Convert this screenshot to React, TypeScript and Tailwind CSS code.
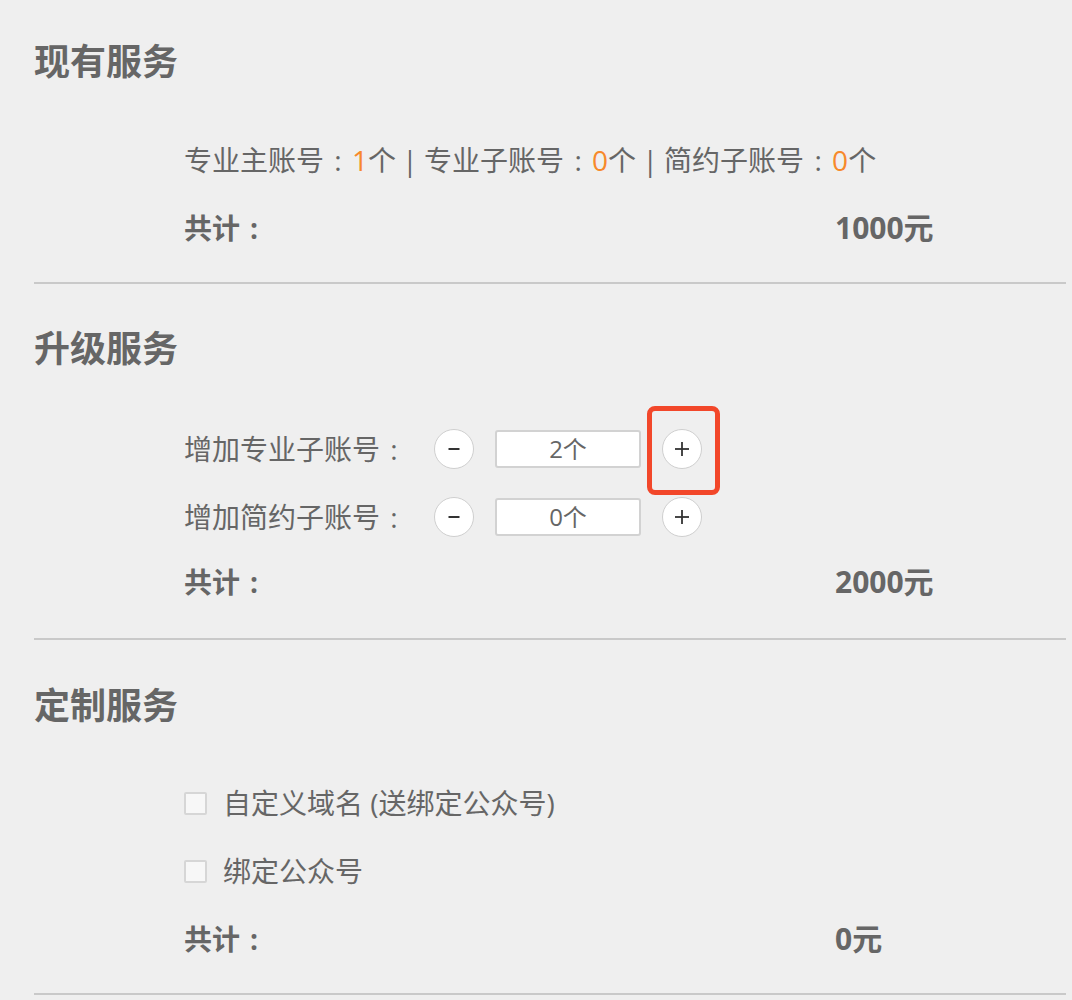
import type { ReactNode } from "react";

const font = { fontFamily: '"Open Sans", "Noto Sans CJK SC", sans-serif' };

// centred full-width colon, like the original
function Colon() {
  return <span className="inline-block w-[28px] text-center">:</span>;
}

function Heading({ children }: { children: ReactNode }) {
  return (
    <div className="flex h-[50px] items-center text-[36px] font-bold leading-none text-[#666]">
      {children}
    </div>
  );
}

function Total({ amount, className = "h-[68px]" }: { amount: string; className?: string }) {
  return (
    <div className={`flex items-center pl-[150px] text-[28px] font-bold leading-none text-[#666] ${className}`}>
      <span className="w-[651px]">
        共计<Colon />
      </span>
      <span className="text-[30px]">{amount}</span>
    </div>
  );
}

function Divider() {
  return <div className="h-[2px] bg-[#c9c9c9]" />;
}

function Orange({ children }: { children: ReactNode }) {
  return <span className="text-[#f7892b]">{children}</span>;
}

function Sep() {
  return <span className="inline-block w-[28px] text-center">|</span>;
}

function RoundButton({ kind, highlight }: { kind: "minus" | "plus"; highlight?: boolean }) {
  return (
    <button className="relative flex h-[40px] w-[40px] items-center justify-center rounded-full border-[1.5px] border-[#cfcfcf] bg-white">
      <svg width="16" height="16" viewBox="0 0 16 16" className="text-[#333]">
        {kind === "minus" ? (
          <line x1="2.5" y1="8" x2="13.5" y2="8" stroke="currentColor" strokeWidth="2" />
        ) : (
          <>
            <line x1="1" y1="8" x2="15" y2="8" stroke="currentColor" strokeWidth="1.8" />
            <line x1="8" y1="1" x2="8" y2="15" stroke="currentColor" strokeWidth="1.8" />
          </>
        )}
      </svg>
      {highlight && (
        <span className="pointer-events-none absolute -left-[16px] -top-[24px] h-[89px] w-[73px] rounded-[8px] border-[5px] border-[#f2472a]" />
      )}
    </button>
  );
}

function Stepper({ label, value, highlight }: { label: string; value: string; highlight?: boolean }) {
  return (
    <div className="flex h-[68px] items-center pl-[150px] text-[28px] leading-none text-[#666]">
      <span className="w-[250px]">
        {label}
        <Colon />
      </span>
      <RoundButton kind="minus" />
      <div className="mx-[21px] flex h-[38px] w-[146px] items-center justify-center rounded-[3px] border-2 border-[#d2d2d2] bg-white text-[24px] text-[#666]">
        {value}
      </div>
      <RoundButton kind="plus" highlight={highlight} />
    </div>
  );
}

function CheckRow({ label }: { label: string }) {
  return (
    <div className="flex h-[68px] items-center pl-[150px] text-[28px] leading-none text-[#666]">
      <span className="mr-[16px] h-[23px] w-[23px] rounded-[2px] border-2 border-[#d6d6d6] bg-[#f7f7f7]" />
      <span>{label}</span>
    </div>
  );
}

export default function App() {
  return (
    <div className="min-h-screen bg-[#efefef] pl-[34px] pr-[6px]" style={font}>
      {/* 现有服务 */}
      <section className="pt-[37px]">
        <Heading>现有服务</Heading>
        <div className="mt-[39px] flex h-[68px] items-center pl-[150px] text-[28px] leading-none text-[#666]">
          专业主账号<Colon />
          <Orange>1</Orange>个<Sep />专业子账号<Colon />
          <Orange>0</Orange>个<Sep />简约子账号<Colon />
          <Orange>0</Orange>个
        </div>
        <Total amount="1000元" />
        <div className="mt-[20px]">
          <Divider />
        </div>
      </section>

      {/* 升级服务 */}
      <section className="pt-[40px]">
        <Heading>升级服务</Heading>
        <div className="mt-[41px]">
          <Stepper label="增加专业子账号" value="2个" highlight />
          <Stepper label="增加简约子账号" value="0个" />
        </div>
        <Total amount="2000元" className="h-[62px]" />
        <div className="mt-[25px]">
          <Divider />
        </div>
      </section>

      {/* 定制服务 */}
      <section className="pt-[41px]">
        <Heading>定制服务</Heading>
        <div className="mt-[38px]">
          <CheckRow label="自定义域名 (送绑定公众号)" />
          <CheckRow label="绑定公众号" />
        </div>
        <Total amount="0元" />
        <div className="mt-[20px]">
          <Divider />
        </div>
      </section>
    </div>
  );
}
